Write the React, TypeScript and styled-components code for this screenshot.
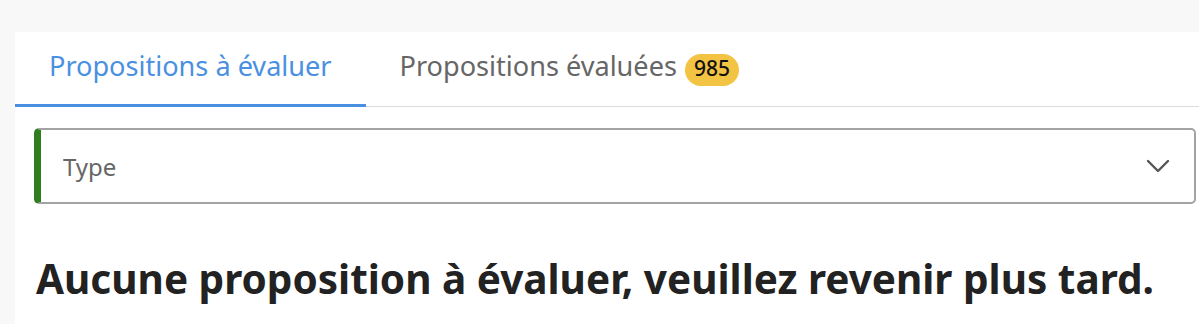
import React, { useState } from "react";
import styled, { createGlobalStyle } from "styled-components";

const GlobalStyle = createGlobalStyle`
  html, body {
    margin: 0;
    padding: 0;
    background: #f8f8f8;
    overflow: hidden;
  }
  body {
    font-family: "Noto Sans", "Open Sans", sans-serif;
  }
`;

const tabs = [
  { id: "todo", label: "Propositions à évaluer" },
  { id: "done", label: "Propositions évaluées", count: 985 },
];

const Chevron = () => (
  <svg width="24" height="14" viewBox="0 0 24 14" fill="none">
    <path
      d="M2 2l10 10L22 2"
      stroke="#555"
      strokeWidth="2.4"
      strokeLinecap="round"
      strokeLinejoin="round"
    />
  </svg>
);

export default function App() {
  const [active, setActive] = useState("todo");

  return (
    <>
      <GlobalStyle />
      <Panel>
        <TabBar>
          {tabs.map((tab) => (
            <Tab
              key={tab.id}
              $active={tab.id === active}
              onClick={() => setActive(tab.id)}
            >
              {tab.label}
              {tab.count !== undefined && <Badge>{tab.count}</Badge>}
            </Tab>
          ))}
        </TabBar>
        <Content>
          <Select>
            <SelectLabel>Type</SelectLabel>
            <Chevron />
          </Select>
          <Message>Aucune proposition à évaluer, veuillez revenir plus tard.</Message>
        </Content>
      </Panel>
    </>
  );
}

const Panel = styled.div`
  margin: 32px -20px 0 15px;
  background: #fff;
  min-height: 292px;
`;

const TabBar = styled.div`
  display: flex;
  border-bottom: 1px solid #dcdcdc;
`;

const Tab = styled.button<{ $active: boolean }>`
  display: flex;
  align-items: baseline;
  padding: 15px 34px 18px;
  border: none;
  border-bottom: 3px solid ${({ $active }) => ($active ? "#4a90e2" : "transparent")};
  margin-bottom: -1px;
  background: none;
  font-family: "Noto Sans", "Open Sans", sans-serif;
  font-size: 27.1px;
  line-height: 37px;
  color: ${({ $active }) => ($active ? "#4a90e2" : "#666")};
  cursor: pointer;
`;

const Badge = styled.span`
  margin-left: 8px;
  padding: 4px 9px 8px;
  border-radius: 16px;
  background: #f3c343;
  color: #111;
  font-size: 21px;
  font-weight: 500;
  line-height: 20px;
`;

const Content = styled.div`
  padding: 21px 23px 0 19px;
`;

const Select = styled.div`
  display: flex;
  align-items: center;
  justify-content: space-between;
  height: 76px;
  box-sizing: border-box;
  padding: 0 24px 0 22px;
  border: 2px solid #a3a3a3;
  border-left: 7px solid #2e7d1f;
  border-radius: 5px;
  background: #fff;
`;

const SelectLabel = styled.span`
  font-size: 24px;
  color: #666;
`;

const Message = styled.h2`
  margin: 51px 0 0 2px;
  font-size: 40.5px;
  line-height: 48px;
  font-weight: 700;
  color: #222;
  white-space: nowrap;
`;
